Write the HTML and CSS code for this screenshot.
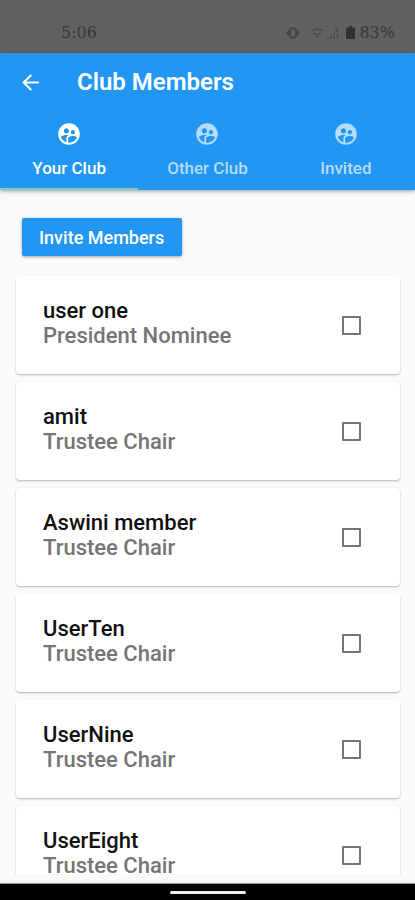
FILE: index.html
```html
<!DOCTYPE html>
<html lang="en">
<head>
<meta charset="utf-8">
<meta name="viewport" content="width=device-width, initial-scale=1">
<title>Club Members</title>
<link rel="stylesheet" href="styles.css">
</head>
<body>
<svg class="defs" aria-hidden="true">
  <symbol id="group" viewBox="0 0 24 24"><path fill="currentColor" d="M11.99 2c-5.52 0-10 4.48-10 10s4.48 10 10 10 10-4.48 10-10-4.48-10-10-10zm3.61 6.34c1.07 0 1.93.86 1.93 1.93 0 1.07-.86 1.93-1.93 1.93-1.07 0-1.93-.86-1.93-1.93-.01-1.07.86-1.93 1.93-1.93zm-6-1.58c1.3 0 2.36 1.06 2.36 2.36 0 1.3-1.06 2.36-2.36 2.36s-2.36-1.06-2.36-2.36c0-1.31 1.05-2.36 2.36-2.36zm0 9.13v3.75c-2.4-.75-4.3-2.6-5.14-4.96 1.05-1.12 3.67-1.69 5.14-1.69.53 0 1.2.08 1.9.22-1.64.87-1.9 2.02-1.9 2.68zM11.99 20c-.27 0-.53-.01-.79-.04v-4.07c0-1.42 2.94-2.13 4.4-2.13 1.07 0 2.92.39 3.84 1.15-1.17 2.97-4.06 5.09-7.45 5.09z"/></symbol>
</svg>
<div class="status">
  <span>5:06</span>
  <div class="status-right">
    <svg class="vibrate" viewBox="0 0 14 12" aria-hidden="true"><path fill="currentColor" fill-rule="evenodd" d="M4 .5h6v2h1.500v1.500h1l1.500 2-1.500 2h-1v1.500H10v2H4v-2H2.500V8h-1L0 6l1.500-2h1V2.500H4zM5 2.500v7h4v-7z"/></svg>
    <svg class="wifi" viewBox="0 0 14 12" aria-hidden="true"><path fill="none" stroke="currentColor" stroke-width="1.300" d="M1.500 4c3-2.800 8-2.800 11 0M3.500 6c2 1.600 5 1.600 7 0"/><path fill="currentColor" d="M5.500 9h3L7 11z"/></svg>
    <svg class="signal" viewBox="0 0 12 12" aria-hidden="true"><path fill="none" stroke="currentColor" stroke-width="1.300" d="M1 12v-2M4 12v-4M7 12v-6M10.500 12v-5M8.500 1.500h2v3h-2"/></svg>
    <svg class="battery" viewBox="0 0 9 13" aria-hidden="true"><path fill="currentColor" d="M3 0h3v1.500h2q1 0 1 1V12q0 1-1 1H1q-1 0-1-1V2.500q0-1 1-1h2z"/></svg>
    <span>83%</span>
  </div>
</div>
<header class="header">
  <div class="bar">
    <button class="back" type="button" aria-label="Back"><svg viewBox="0 0 24 24" aria-hidden="true"><path fill="currentColor" d="M20 11H7.830l5.590-5.590L12 4l-8 8 8 8 1.410-1.410L7.830 13H20v-2z"/></svg></button>
    <h1>Club Members</h1>
  </div>
  <nav class="tabs">
    <a class="tab active" href="#yours"><svg aria-hidden="true"><use href="#group"/></svg>Your Club</a>
    <a class="tab" href="#other"><svg aria-hidden="true"><use href="#group"/></svg>Other Club</a>
    <a class="tab" href="#invited"><svg aria-hidden="true"><use href="#group"/></svg>Invited</a>
  </nav>
</header>
<main class="content">
  <button class="invite" type="button">Invite Members</button>
  <div class="list">
    <label class="card"><span class="who"><b>user one</b><span>President Nominee</span></span><input type="checkbox"></label>
    <label class="card"><span class="who"><b>amit</b><span>Trustee Chair</span></span><input type="checkbox"></label>
    <label class="card"><span class="who"><b>Aswini member</b><span>Trustee Chair</span></span><input type="checkbox"></label>
    <label class="card"><span class="who"><b>UserTen</b><span>Trustee Chair</span></span><input type="checkbox"></label>
    <label class="card"><span class="who"><b>UserNine</b><span>Trustee Chair</span></span><input type="checkbox"></label>
    <label class="card"><span class="who"><b>UserEight</b><span>Trustee Chair</span></span><input type="checkbox"></label>
  </div>
</main>
<div class="system-nav"><span class="handle"></span></div>
</body>
</html>
```

FILE: styles.css
```css
* { box-sizing: border-box; }
body {
  margin: 0;
  height: 100vh;
  display: flex;
  flex-direction: column;
  overflow: hidden;
  background: #fafafa;
  font-family: Roboto, sans-serif;
  font-weight: 500;
}
.defs { display: none; }
svg { display: block; }
.status {
  flex: none;
  height: 53px;
  padding: 12px 20px 0 61px;
  display: flex;
  align-items: center;
  justify-content: space-between;
  background: #616161;
  color: #363636;
  font: 16px "DejaVu Serif", serif;
}
.status-right { display: flex; align-items: center; }
.vibrate { width: 14px; height: 12px; margin-right: 10px; color: #444; }
.wifi { width: 14px; height: 12px; margin-right: 3px; color: #484848; }
.signal { width: 12px; height: 12px; margin-right: 7px; color: #4a4a4a; }
.battery { width: 9px; height: 13px; margin-right: 4px; color: #303030; }
.header {
  flex: none;
  position: relative;
  background: #2196f3;
  color: #fff;
  box-shadow: 0 1px 4px rgba(0, 0, 0, .4);
}
.bar { display: flex; align-items: center; height: 58px; padding: 0 18px; }
.back {
  padding: 0;
  margin-right: 34px;
  border: 0;
  background: none;
  color: inherit;
}
.back svg { width: 25px; height: 25px; }
h1 { margin: 0; font-size: 24px; font-weight: 600; line-height: 32px; }
.tabs { display: flex; }
.tab {
  flex: 1;
  height: 79px;
  padding-top: 10px;
  display: flex;
  flex-direction: column;
  align-items: center;
  gap: 9px;
  border-bottom: 2px solid transparent;
  color: #b5dcfb;
  font-size: 17px;
  line-height: 24px;
  text-decoration: none;
}
.tab svg { width: 26px; height: 26px; }
.tab.active { color: #fff; border-bottom-color: #80cbc4; }
.content {
  flex: 1;
  min-height: 0;
  display: flex;
  flex-direction: column;
  padding: 28px 15px 10px 16px;
}
.invite {
  flex: none;
  align-self: flex-start;
  height: 38px;
  margin: 0 0 0 6px;
  padding: 0 18px 0 17px;
  border: 0;
  border-radius: 2px;
  background: #2196f3;
  box-shadow: 0 1px 3px rgba(0, 0, 0, .35);
  color: #fff;
  font: 500 18px Roboto, sans-serif;
}
.list {
  flex: 1;
  min-height: 0;
  margin: 16px -4px 0;
  padding: 4px 4px 0;
  overflow: hidden;
}
.card {
  display: flex;
  align-items: center;
  justify-content: space-between;
  height: 98px;
  margin-bottom: 8px;
  padding: 0 39px 0 27px;
  border-radius: 4px;
  background: #fff;
  box-shadow: 0 1px 2px rgba(0, 0, 0, .28);
}
.who { display: flex; flex-direction: column; padding-bottom: 4px; font-size: 22px; line-height: 25px; color: #757575; }
.who b { font-weight: 500; color: #111; }
.card input {
  appearance: none;
  width: 19px;
  height: 19px;
  margin: 0;
  border: 2px solid #757575;
  border-radius: 1px;
}
.card input:checked { background: #2196f3; border-color: #2196f3; }
.system-nav {
  flex: none;
  height: 16px;
  display: flex;
  align-items: center;
  justify-content: center;
  background: #000;
  box-shadow: 0 -1px 1px #999;
}
.handle { width: 76px; height: 3px; border-radius: 2px; background: #eee; }
```
